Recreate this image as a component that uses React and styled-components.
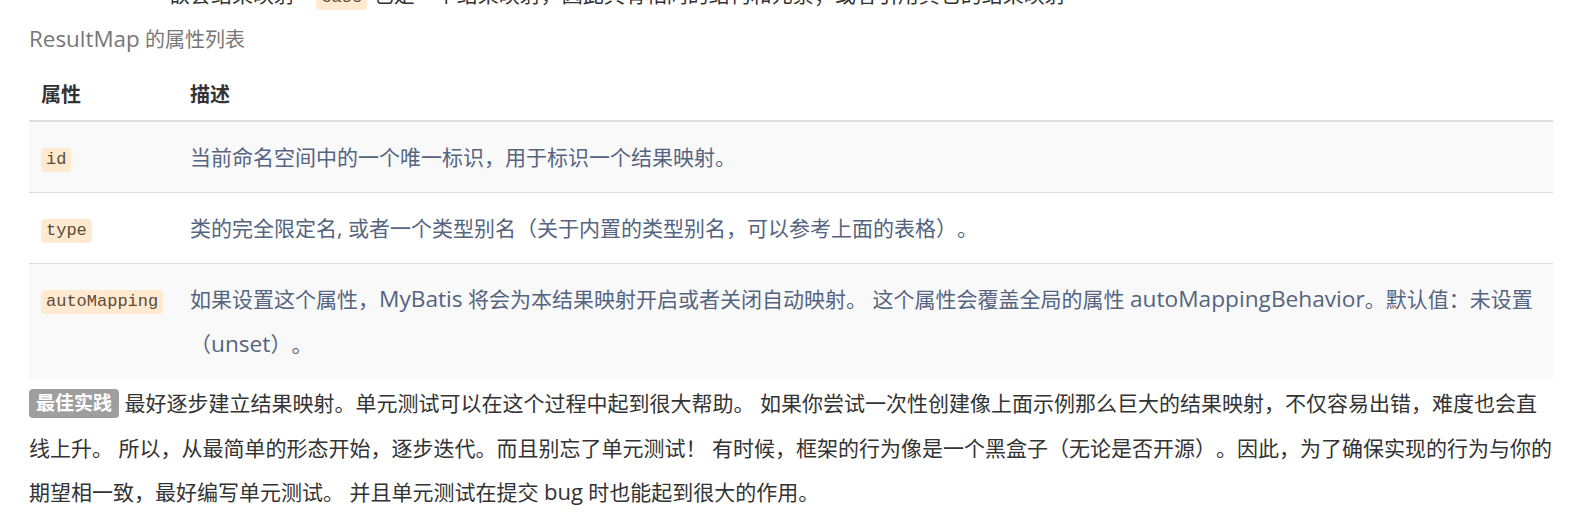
import styled, { createGlobalStyle } from "styled-components";

const GlobalStyle = createGlobalStyle`
	html, body {
		margin: 0;
		padding: 0;
		background: #fff;
		overflow: hidden;
	}
	body {
		font-family: "Open Sans", "Noto Sans CJK SC", sans-serif;
		color: #333;
		text-spacing-trim: space-all;
	}
`;

const Page = styled.div`
	width: 1524px;
	padding-left: 29px;
`;

const ListLine = styled.div`
	margin-top: -28px;
	padding-left: 140px;
	font-size: 21px;
	line-height: 45px;
	color: #333;
	white-space: nowrap;
`;

// latin words render a bit larger than the CJK around them
const Latin = styled.span`
	font-size: ${(p) => p.$scale || 1.08}em;
	line-height: 1;
`;

const Code = styled.code`
	display: inline-block;
	font-family: "Liberation Mono", "DejaVu Sans Mono", monospace;
	font-size: 17px;
	line-height: 24px;
	padding: 0 5px;
	border-radius: 4px;
	background: #ffe9cf;
	color: #5c4b3a;
	vertical-align: ${(p) => (p.$inTable ? "1px" : "baseline")};
`;

const Caption = styled.p`
	margin: 0;
	font-size: 20px;
	line-height: 45px;
	color: #777;
`;

const Table = styled.table`
	width: 100%;
	border-collapse: collapse;
	border-spacing: 0;
`;

const HeadCell = styled.th`
	text-align: left;
	font-size: 20px;
	font-weight: 700;
	line-height: 30px;
	color: #333;
	padding: 18px 16px 10px 12px;
	border-bottom: 2px solid #ddd;
	width: ${(p) => p.$width || "auto"};
`;

const Row = styled.tr`
	background: ${(p) => (p.$shaded ? "#f9f9f9" : "#fff")};

	&:not(:last-child) {
		border-bottom: 1px solid #ddd;
	}
`;

const Cell = styled.td`
	font-size: 21px;
	line-height: 45px;
	color: #556480;
	padding: 13px 16px 12px 12px;
	vertical-align: top;

	&:first-child {
		padding-right: 8px;
	}
`;

const Para = styled.p`
	margin: 2px 0 0;
	font-size: 21px;
	line-height: 44.5px;
	color: #333;
`;

const Badge = styled.span`
	display: inline-block;
	background: #9e9e9e;
	color: #fff;
	font-weight: 700;
	font-size: 19px;
	line-height: 29px;
	padding: 0 7px;
	border-radius: 4px;
	vertical-align: 1px;
`;

const rows = [
	{
		name: "id",
		desc: <>当前命名空间中的一个唯一标识，用于标识一个结果映射。</>,
	},
	{
		name: "type",
		desc: <>类的完全限定名, 或者一个类型别名（关于内置的类型别名，可以参考上面的表格）。</>,
	},
	{
		name: "autoMapping",
		desc: (
			<>
				如果设置这个属性，<Latin>MyBatis</Latin> 将会为本结果映射开启或者关闭自动映射。 这个属性会覆盖全局的属性{" "}
				<Latin>autoMappingBehavior</Latin>。默认值：未设置（<Latin>unset</Latin>）。
			</>
		),
	},
];

export default function App() {
	return (
		<>
			<GlobalStyle />
			<Page>
				<ListLine>
					嵌套结果映射 – <Code>case</Code> 也是一个结果映射，因此具有相同的结构和元素；或者引用其它的结果映射
				</ListLine>
				<Caption>
					<Latin $scale={1.12}>ResultMap</Latin> 的属性列表
				</Caption>
				<Table>
					<thead>
						<tr>
							<HeadCell $width="121px">属性</HeadCell>
							<HeadCell>描述</HeadCell>
						</tr>
					</thead>
					<tbody>
						{rows.map((row, i) => (
							<Row key={row.name} $shaded={i % 2 === 0}>
								<Cell>
									<Code $inTable>{row.name}</Code>
								</Cell>
								<Cell>{row.desc}</Cell>
							</Row>
						))}
					</tbody>
				</Table>
				<Para>
					<Badge>最佳实践</Badge> 最好逐步建立结果映射。单元测试可以在这个过程中起到很大帮助。 如果你尝试一次性创建像上面示例那么巨大的结果映射，不仅容易出错，难度也会直线上升。 所以，从最简单的形态开始，逐步迭代。而且别忘了单元测试！ 有时候，框架的行为像是一个黑盒子（无论是否开源）。因此，为了确保实现的行为与你的期望相一致，最好编写单元测试。 并且单元测试在提交 <Latin $scale={1.05}>bug</Latin> 时也能起到很大的作用。
				</Para>
			</Page>
		</>
	);
}
